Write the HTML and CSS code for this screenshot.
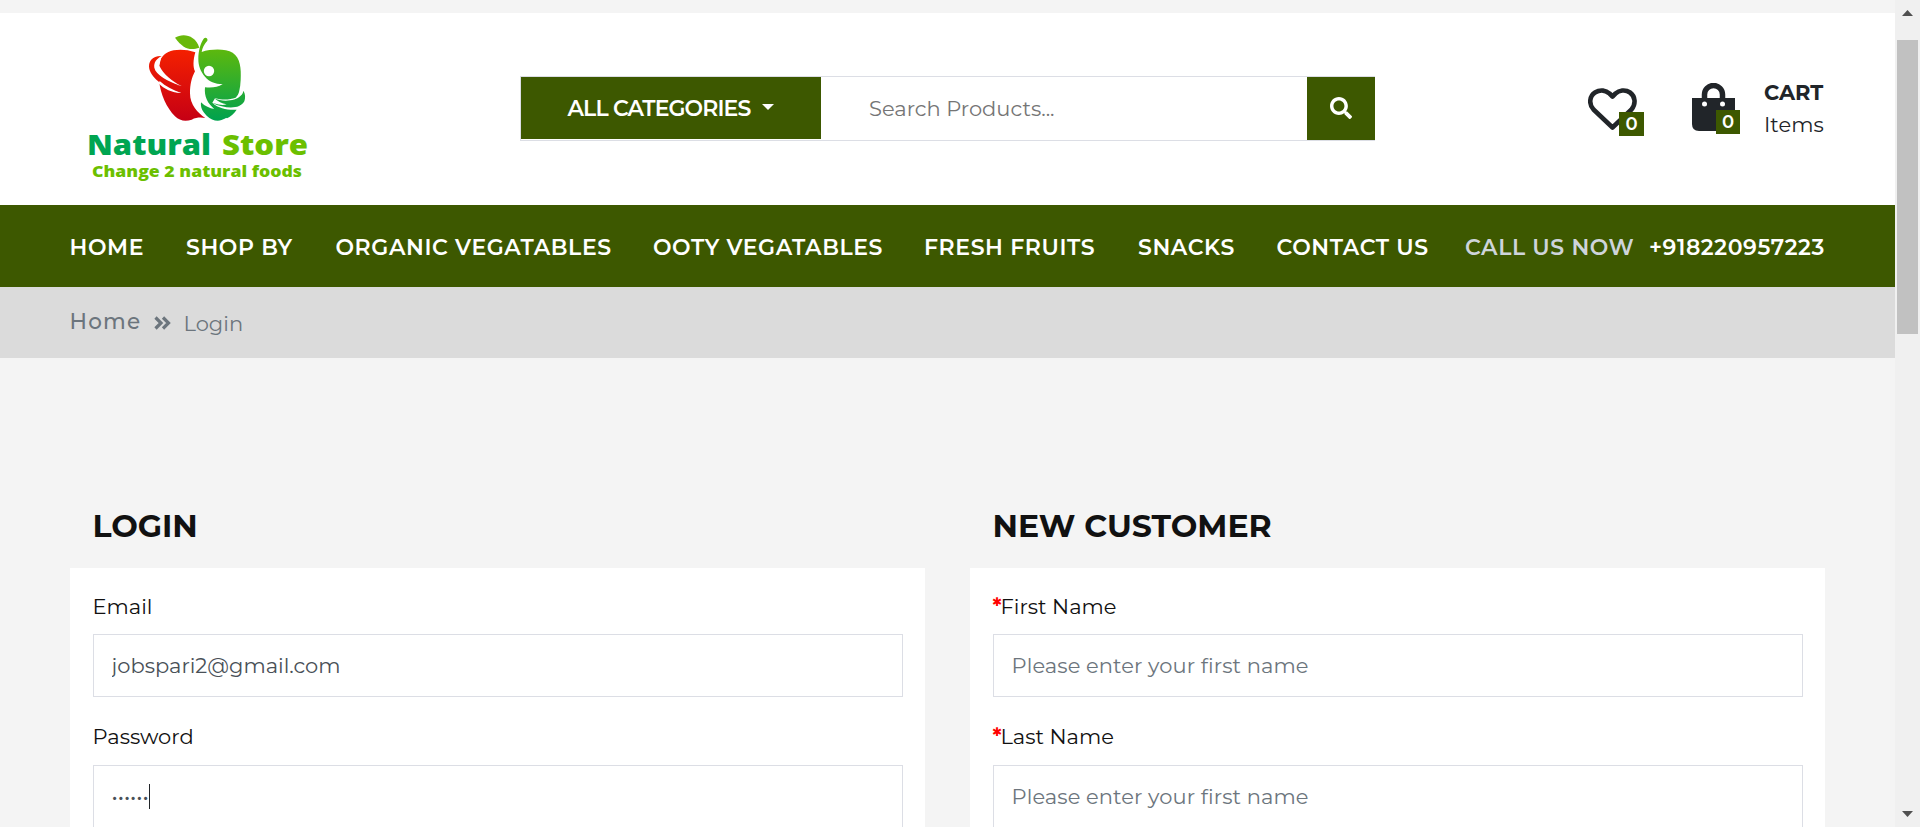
FILE: index.html
```html
<!DOCTYPE html>
<html lang="en">
<head>
<meta charset="utf-8">
<title>Natural Store - Login</title>
<link rel="stylesheet" href="styles.css">
</head>
<body>
<div class="page">
  <header class="header">
    <a class="logo" href="#">
      <svg width="270" height="192" viewBox="70 13 270 192">
        <defs>
          <linearGradient id="red" gradientUnits="userSpaceOnUse" x1="0" y1="75" x2="0" y2="285"><stop offset="0" stop-color="#f42000"/><stop offset="1" stop-color="#c60014"/></linearGradient>
          <linearGradient id="green" gradientUnits="userSpaceOnUse" x1="0" y1="75" x2="0" y2="285"><stop offset="0" stop-color="#5cb80e"/><stop offset="1" stop-color="#00a24e"/></linearGradient>
        </defs>
        <g transform="translate(135 25) scale(.33333)">
          <path fill="url(#red)" d="M181 82C150 71 117 73 100 81C80 91 73 107 72 125L73 172C76 205 95 250 120 274C134 288 152 290 170 284C185 276 200 277 211 279C188 264 165 240 165 205C165 178 170 158 180 139C174 128 174 106 181 82Z"/>
          <path fill="#fff" d="M80 90L73 122C86 148 110 168 140 183C105 175 66 156 55 128Z"/>
          <path fill="#fff" d="M62 160C85 182 110 196 139 204C110 203 88 193 70 174Z"/>
          <path fill="url(#red)" d="M80 93C52 92 38 110 43 132C50 160 90 190 135 203C120 194 110 187 98 178L137 182C100 170 62 150 58 128C56 112 65 101 80 93Z"/>
          <path fill="#fff" d="M72 173C90 190 112 200 138 204C112 194 92 184 74 168Z"/>
          <path fill="#69b80a" d="M120 38C142 24 180 28 193 68C165 78 144 71 120 38Z"/>
          <path fill="url(#green)" d="M190 103C190 76 197 54 206 41C211 34 220 40 217 47C207 58 202 68 200 81C230 71 272 71 293 83C316 98 319 130 317 165C316 190 311 210 303 226C303 240 300 252 290 262C270 290 240 296 215 272C203 260 196 248 198 232C210 244 224 250 238 252C218 236 207 215 210 187C232 189 248 187 263 177C240 177 222 170 210 155C196 140 190 120 190 103Z"/>
          <path fill="#fff" d="M240 220C265 226 285 224 302 218L324 190L334 224C320 254 300 256 286 264C262 258 246 249 232 233Z"/>
          <path fill="url(#green)" d="M238 220C262 232 303 228 316 213C323 208 324 203 325 197C332 208 331 220 328 229C315 254 270 252 232 234C256 240 262 241 275 238C260 236 250 230 238 220Z"/>
          <path fill="url(#green)" d="M232 234C252 251 280 256 305 254C298 266 285 276 276 280L240 262Z"/>
          <circle cx="222" cy="138" r="15.5" fill="#fff"/>
        </g>
        <g class="logo-text">
          <text x="87" y="155" font-size="29" textLength="124" lengthAdjust="spacingAndGlyphs" fill="#00a551">Natural</text>
          <text x="222" y="155" font-size="29" textLength="86" lengthAdjust="spacingAndGlyphs" fill="#6bbf00">Store</text>
          <text x="92" y="177" font-size="16.500" textLength="210" lengthAdjust="spacingAndGlyphs" fill="#6bbf00">Change 2 natural foods</text>
        </g>
      </svg>
    </a>
    <form class="search">
      <button type="button" class="cats">ALL CATEGORIES<i class="caret"></i></button>
      <input class="search-input" type="text" placeholder="Search Products...">
      <button type="button" class="search-btn" aria-label="Search">
        <svg width="22" height="22" viewBox="0 0 512 512"><path fill="#fff" d="M505 442.700 405.300 343c-4.500-4.500-10.600-7-17-7H372c27.600-35.300 44-79.700 44-128C416 93.100 322.900 0 208 0S0 93.100 0 208s93.100 208 208 208c48.300 0 92.700-16.400 128-44v16.300c0 6.400 2.500 12.500 7 17l99.700 99.700c9.400 9.400 24.600 9.400 33.900 0l28.300-28.300c9.400-9.400 9.400-24.600.1-34zM208 336c-70.700 0-128-57.200-128-128 0-70.700 57.200-128 128-128 70.700 0 128 57.200 128 128 0 70.700-57.200 128-128 128z"/></svg>
      </button>
    </form>
    <div class="tools">
      <a class="tool wish" href="#">
        <svg width="50" height="43" viewBox="0 0 50 43"><path fill="none" stroke="#212529" stroke-width="4.600" stroke-linejoin="round" d="M24.500 39.500L5.500 21.500C.5 16 1.500 8 7 4.500C12.500 1 18 2.500 21.500 5.500L24.500 8.500L27.500 5.500C31 2.500 37 1 42 4.500C47.500 8.500 48 16 43.500 21.500Z"/></svg>
        <span class="badge">0</span>
      </a>
      <a class="tool bag" href="#">
        <svg width="43" height="48" viewBox="0 0 43 48"><path fill="#212529" d="M0 15H43V41Q43 48 36 48H7Q0 48 0 41Z"/><path fill="none" stroke="#212529" stroke-width="5.500" d="M12.500 16V11.500A9 9 0 0 1 30.500 11.500V16"/><circle cx="12.500" cy="21" r="2.500" fill="#fff"/><circle cx="30.500" cy="21" r="2.500" fill="#fff"/></svg>
        <span class="badge">0</span>
      </a>
      <div class="cart"><b>CART</b><span>Items</span></div>
    </div>
  </header>
  <nav class="nav">
    <a href="#">HOME</a>
    <a href="#">SHOP BY</a>
    <a href="#">ORGANIC VEGATABLES</a>
    <a href="#">OOTY VEGATABLES</a>
    <a href="#">FRESH FRUITS</a>
    <a href="#">SNACKS</a>
    <a href="#">CONTACT US</a>
    <span class="call">CALL US NOW</span>
    <a href="#">+918220957223</a>
  </nav>
  <div class="crumbs">
    <a href="#">Home</a>
    <svg width="17" height="14" viewBox="0 0 17 14"><path fill="none" stroke="#6c757d" stroke-width="3.200" d="M1.500 1.500L7 7L1.500 12.500M9 1.500L14.500 7L9 12.500"/></svg>
    <span>Login</span>
  </div>
  <main class="main">
    <section>
      <h2>LOGIN</h2>
      <div class="panel">
        <label>Email</label>
        <input class="field" type="text" value="jobspari2@gmail.com">
        <label class="second">Password</label>
        <div class="field pass"><span class="dots">••••••</span><i class="cursor"></i></div>
      </div>
    </section>
    <section>
      <h2>NEW CUSTOMER</h2>
      <div class="panel">
        <label><b>*</b>First Name</label>
        <input class="field" type="text" placeholder="Please enter your first name">
        <label class="second"><b>*</b>Last Name</label>
        <input class="field" type="text" placeholder="Please enter your first name">
      </div>
    </section>
  </main>
</div>
<div class="scrollbar">
  <svg width="11" height="6" viewBox="0 0 11 6"><path fill="#505050" d="M5.500 0L11 6H0Z"/></svg>
  <div class="thumb"></div>
  <svg class="down" width="11" height="6" viewBox="0 0 11 6"><path fill="#505050" d="M0 0H11L5.500 6Z"/></svg>
</div>
</body>
</html>
```
FILE: styles.css
```css
* { box-sizing: border-box; }

body {
  margin: 0;
  height: 827px;
  display: flex;
  overflow: hidden;
  background: #f4f4f4;
  color: #212529;
  font: 400 21px/32px Montserrat, Inter, sans-serif;
  font-variant-ligatures: none;
}

a { color: inherit; text-decoration: none; }
svg { display: block; flex: none; }
button { border: 0; padding: 0; font: inherit; background: #3d5800; color: #fff; }
input { font: inherit; font-variant-ligatures: none; color: #495057; border-radius: 0; outline: 0; }
input::placeholder { color: #6c757d; opacity: 1; }

.page { width: 1895px; height: 827px; overflow: hidden; padding-top: 13px; }

.header { display: flex; height: 192px; padding-left: 70px; background: #fff; }
.logo { width: 450px; }
.logo-text { font-family: "Open Sans", sans-serif; font-weight: 800; }

.search {
  display: flex;
  align-items: flex-start;
  width: 855px;
  height: 65px;
  margin-top: 63px;
  border: 1px solid #dcdee5;
  border-right: 0;
}
.cats {
  display: flex;
  align-items: center;
  width: 300px;
  height: 62px;
  padding: 2px 0 0 46.5px;
  font-size: 22px;
  font-weight: 600;
  letter-spacing: -.88px;
}
.caret {
  margin: -4px 0 0 11.5px;
  border: 6px solid transparent;
  border-top-color: #fff;
  border-bottom: 0;
}
.search-input { width: 486px; height: 63px; padding: 0 0 0 48px; border: 0; }
.search-input::placeholder { color: #757575; }
.search-btn { display: flex; align-items: center; justify-content: center; width: 68px; height: 63px; padding: 0 1px 1px 0; }

.tools { display: flex; margin-left: 213px; padding-top: 64px; }
.tool { position: relative; }
.wish { width: 104px; padding-top: 11px; }
.bag { width: 72px; padding-top: 6px; }
.badge {
  position: absolute;
  display: flex;
  align-items: center;
  justify-content: center;
  width: 25px;
  height: 24px;
  background: #3d5800;
  color: #fff;
  font-size: 18px;
  font-weight: 600;
}
.wish .badge { left: 31px; top: 35px; }
.bag .badge { left: 24px; top: 33px; width: 24px; }
.cart { display: flex; flex-direction: column; }
.cart b { font-weight: 700; }

.nav {
  display: grid;
  grid-template-columns: 116.5px 149.5px 317.5px 271px 214px 138.500px 188.5px 184px auto;
  align-items: center;
  height: 82px;
  padding: 3px 0 0 69.5px;
  background: #3d5800;
  color: #fff;
  font-size: 22px;
  font-weight: 600;
  letter-spacing: .6px;
  white-space: nowrap;
}
.call { color: #ced4da; }

.crumbs { display: flex; align-items: flex-start; height: 71px; padding: 19px 0 0 69.5px; background: #dbdbdb; color: #6c757d; }
.crumbs a { width: 84.5px; font-size: 21.5px; font-weight: 500; letter-spacing: 1.2px; margin-top: -1px; }
.crumbs svg { margin-top: 10px; }
.crumbs span { margin: 2px 0 0 12.5px; }

.main { display: grid; grid-template-columns: 855px 855px; gap: 45px; padding: 152px 0 0 70px; }
h2 { margin: 0; padding-left: 22.5px; font-size: 31.5px; font-weight: 700; line-height: 32px; height: 58px; color: #111; }

.panel { height: 400px; padding: 22px 22px 0 23px; background: #fff; }
.panel label { display: block; height: 44px; line-height: 33px; margin-left: -.5px; color: #111; }
.panel label.second { line-height: 31px; }
.panel label b { display: inline-block; width: 8px; font-weight: 700; color: red; }
.field {
  display: flex;
  align-items: center;
  width: 810px;
  height: 63px;
  margin-bottom: 24px;
  padding: 0 17.5px;
  border: 1px solid #dcdee5;
  background: #fff;
}
input.field { display: block; }
.field::placeholder { letter-spacing: .08px; }
.pass { color: #495057; }
.dots { width: 37px; white-space: nowrap; }
.cursor { width: 1px; height: 25px; background: #212529; }

.scrollbar { display: flex; flex-direction: column; align-items: center; width: 25px; height: 827px; padding: 10px 0; background: #f0f0f0; }
.thumb { width: 21px; height: 294px; margin-top: 24px; background: #c1c1c1; }
.down { margin-top: auto; }
```
